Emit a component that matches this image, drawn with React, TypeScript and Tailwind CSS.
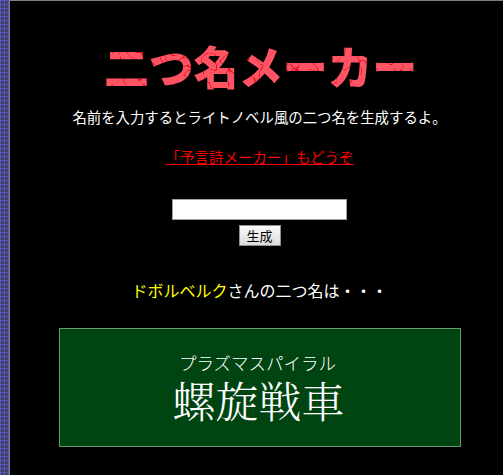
export default function App() {
  return (
    <div className="flex h-[475px] w-[503px] overflow-hidden bg-black font-['Noto_Sans_CJK_JP',sans-serif]">
      <div className="h-full w-[9px] shrink-0 bg-[#3f3f5f] bg-[linear-gradient(#5555bb_1px,transparent_1px),linear-gradient(90deg,#5555bb_1px,transparent_1px)] bg-[length:4px_4px]" />
      <div className="flex h-full min-w-0 flex-1 flex-col items-center border-l border-t border-[#808080] pl-[6px]">
        <svg width="330" height="60" viewBox="0 0 330 60" className="mt-[36px] shrink-0">
          <defs>
            <filter id="veins" x="0" y="0" width="100%" height="100%" colorInterpolationFilters="sRGB">
              <feTurbulence type="fractalNoise" baseFrequency="0.06" numOctaves="2" seed="7" result="n" />
              <feColorMatrix in="n" type="matrix" values="0 0 0 0 0.85  0 0 0 0 0  0 0 0 0 0.06  40 0 0 0 -18.6" result="a" />
              <feColorMatrix in="n" type="matrix" values="0 0 0 0 0.85  0 0 0 0 0  0 0 0 0 0.06  -40 0 0 0 20.4" result="b" />
              <feComposite in="a" in2="b" operator="in" result="band" />
              <feComposite in="band" in2="SourceAlpha" operator="in" result="vein" />
              <feMerge>
                <feMergeNode in="SourceGraphic" />
                <feMergeNode in="vein" />
              </feMerge>
            </filter>
          </defs>
          <text x="165.5" y="48" textAnchor="middle" fontSize="45" fontWeight="900" fill="#ff5464" letterSpacing="-0.3" filter="url(#veins)" fontFamily="'Noto Sans CJK JP', sans-serif">
            二つ名メーカー
          </text>
        </svg>
        <p className="mt-[9px] text-[14.4px] leading-[22px] text-white">名前を入力するとライトノベル風の二つ名を生成するよ。</p>
        <a className="mt-[18px] text-[14.5px] leading-[22px] text-[#ff0000] underline">「予言詩メーカー」もどうぞ</a>
        <input className="mt-[31px] h-[21px] w-[175px] border border-[#a0a0a0] bg-white" />
        <button className="mt-[5px] h-[21px] w-[42px] border border-[#8f8f8f] bg-[linear-gradient(#fafafa,#dcdcdc)] text-[13px] leading-[19px] text-black">生成</button>
        <p className="mt-[32px] text-[16px] leading-[24px] text-white"><span className="text-[#ffff00]">ドボルベルク</span>さんの二つ名は・・・</p>
        <div className="ml-[1px] mt-[26px] flex h-[119px] w-[402px] shrink-0 flex-col items-center border border-[#6a9a6a] bg-[#004411] pt-[21px] text-white">
          <div className="mr-[5px] text-[17.5px] font-light leading-[25px]">プラズマスパイラル</div>
          <div className="mr-[3px] mt-[3px] font-['Noto_Serif_CJK_JP','Noto_Sans_CJK_JP',serif] text-[43px] font-light leading-[43px]">螺旋戦車</div>
        </div>
      </div>
    </div>
  );
}
